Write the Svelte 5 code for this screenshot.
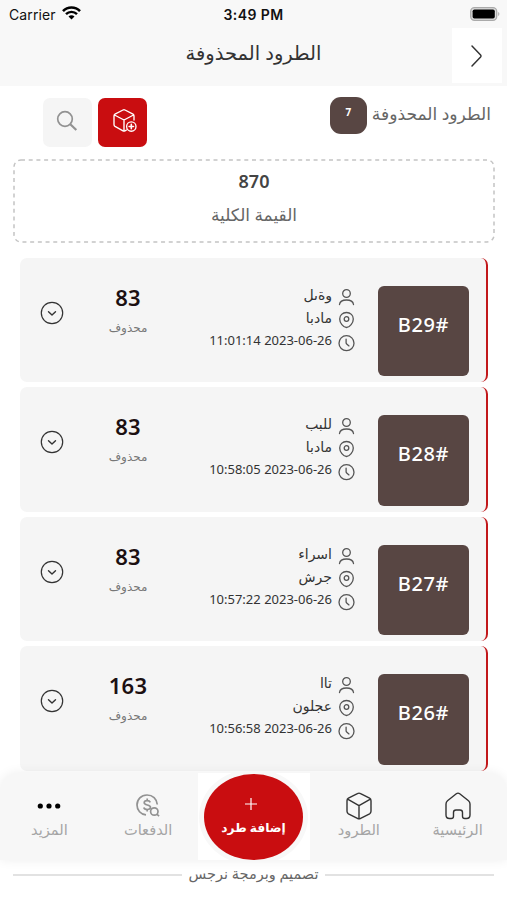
<script lang="ts">
  const parcels = [
    { id: '#B29', name: 'وةىل', city: 'مادبا', date: '2023-06-26 11:01:14', price: 83 },
    { id: '#B28', name: 'للبب', city: 'مادبا', date: '2023-06-26 10:58:05', price: 83 },
    { id: '#B27', name: 'اسراء', city: 'جرش', date: '2023-06-26 10:57:22', price: 83 },
    { id: '#B26', name: 'تاا', city: 'عجلون', date: '2023-06-26 10:56:58', price: 163 }
  ];

  let openId = $state('');

  function toggle(id: string) {
    openId = openId === id ? '' : id;
  }
</script>

<div class="screen" dir="rtl">
  <header>
    <div class="status" dir="ltr">
      <div class="carrier">
        <span>Carrier</span>
        <svg width="19" height="14" viewBox="0 0 19 14" fill="none" stroke="#000">
          <path d="M1 5.1C5.7.3 13.3.3 18 5.1" stroke-width="2.6" />
          <path d="M4 8.2c3-3.1 8-3.1 11 0" stroke-width="2.4" />
          <path d="M9.5 13.6 6.5 10.6c1.7-1.7 4.3-1.7 6 0z" fill="#000" stroke="none" />
        </svg>
      </div>
      <div class="time">3:49 PM</div>
      <svg class="battery" width="30" height="14" viewBox="0 0 30 14">
        <rect x=".7" y=".7" width="26" height="12.6" rx="3.8" fill="#ddd" stroke="#aaa" stroke-width="1.3" />
        <rect x="2.6" y="2.5" width="22.2" height="9" rx="1.8" fill="#000" />
        <path d="M28.2 5c1.6.5 1.6 3.5 0 4z" fill="#aaa" />
      </svg>
    </div>
    <div class="title-bar">
      <button class="back" aria-label="رجوع">
        <svg width="14" height="24" viewBox="0 0 14 24" fill="none" stroke="#333" stroke-width="1.5" stroke-linecap="round" stroke-linejoin="round">
          <path d="m2 2 8.6 9q.9 1 0 2L2 22" />
        </svg>
      </button>
      <h1>الطرود المحذوفة</h1>
    </div>
  </header>

  <div class="tools">
    <h2>الطرود المحذوفة</h2>
    <span class="count">{7}</span>
    <button class="tool add" aria-label="إضافة">
      <svg width="25" height="25" viewBox="0 0 25 25" fill="none" stroke="#fff" stroke-width="1.35" stroke-linejoin="round" stroke-linecap="round">
        <path d="M22 12V8q0-1.2-1-1.8L13 2q-1-.5-2 0L3 6.2Q2 6.8 2 8v8.500q0 1.200 1 1.800l8 4.500q1 .5 2 0l1.500-.8M2.500 7 12 12l9.500-5M12 12v11" />
        <circle cx="19.300" cy="18.500" r="4.700" fill="#c90d10" />
        <path d="M19.300 16.300v4.400M17.100 18.500h4.400" stroke-width="1.600" />
      </svg>
    </button>
    <button class="tool search" aria-label="بحث">
      <svg width="22" height="22" viewBox="0 0 22 22" fill="none" stroke="#929292" stroke-width="1.7">
        <circle cx="9" cy="9" r="7.300" />
        <path d="m14.300 14.300 6 5.700" stroke-width="2.200" />
      </svg>
    </button>
  </div>

  <div class="total">
    <svg class="dashes" width="482" height="84">
      <rect x="1" y="1" width="480" height="82" rx="7" />
    </svg>
    <strong>870</strong>
    <span>القيمة الكلية</span>
  </div>

  <main>
    {#each parcels as parcel}
      <article class="card">
        <div class="tile">{parcel.id}</div>
        <div class="info">
          <div class="line">
            <svg width="17" height="18" viewBox="0 0 17 18">
              <circle cx="8.500" cy="5.500" r="3.800" />
              <path d="M1.500 16.500c.8-6 13.200-6 14 0" />
            </svg>
            <span>{parcel.name}</span>
          </div>
          <div class="line">
            <svg width="17" height="18" viewBox="0 0 17 18">
              <path d="M8.500 1.500c-4 0-6.800 2.800-6.800 6.400 0 4 3.500 8.600 6.800 8.600s6.800-4.600 6.800-8.600c0-3.600-2.800-6.400-6.800-6.400z" />
              <circle cx="8.500" cy="8" r="2.300" />
            </svg>
            <span>{parcel.city}</span>
          </div>
          <div class="line">
            <svg width="17" height="18" viewBox="0 0 17 18">
              <circle cx="8.500" cy="9.200" r="7.500" />
              <path d="M8.100 5.200v3.500q0 .7.6 1.200l2.300 2" />
            </svg>
            <span class="date">{parcel.date}</span>
          </div>
        </div>
        <div class="amount">
          <strong>{parcel.price}</strong>
          <span>محذوف</span>
        </div>
        <button class="expand" class:open={openId === parcel.id} onclick={() => toggle(parcel.id)} aria-label="تفاصيل">
          <svg width="24" height="24" viewBox="0 0 24 24" fill="none" stroke="#333" stroke-width="1.200" stroke-linecap="round" stroke-linejoin="round">
            <circle cx="12" cy="12" r="10.700" />
            <path d="m8.500 10.700 3.500 3.400 3.500-3.400" stroke-width="1.400" />
          </svg>
        </button>
      </article>
    {/each}
  </main>

  <nav>
    <a class="tab" href="#home">
      <svg width="28" height="28" viewBox="0 0 28 28" fill="none" stroke="#333" stroke-width="1.400" stroke-linejoin="round">
        <path d="M2 12q0-2 1.500-3.200L12.300 1.800q1.700-1.300 3.400 0l8.800 7Q26 10 26 12v11q0 3.500-3.500 3.500h-1.700q-2.300 0-2.300-2.300v-3.700q0-2.500-2.500-2.500h-4q-2.500 0-2.500 2.500v3.700q0 2.300-2.300 2.300H5.500Q2 26.500 2 23z" />
      </svg>
      <span>الرئيسية</span>
    </a>
    <a class="tab" href="#parcels">
      <svg width="28" height="28" viewBox="0 0 28 28" fill="none" stroke="#333" stroke-width="1.400" stroke-linejoin="round">
        <path d="M12.400 1.600q1.600-.9 3.200 0l9 4.600Q26 7 26 8.700v10.600q0 1.700-1.400 2.500l-9 4.600q-1.600.9-3.200 0l-9-4.600Q2 21 2 19.300V8.700Q2 7 3.400 6.200zM2.600 7.200 14 13.600l11.400-6.400M14 13.600v13" />
      </svg>
      <span>الطرود</span>
    </a>
    <div class="middle">
      <button class="new">
        <svg width="14" height="14" viewBox="0 0 14 14" stroke="#fff" stroke-width="1.200">
          <path d="M7 1v12M1 7h12" />
        </svg>
        <span>إضافة طرد</span>
      </button>
    </div>
    <a class="tab" href="#payments">
      <svg width="28" height="28" viewBox="0 0 28 28" fill="none" stroke="#929292" stroke-width="1.700">
        <path d="M23.300 12.500C22.800 6.800 18.700 3 13 3 7.200 3 3 7.300 3 13c0 5.200 3.700 9.400 9 9.900" />
        <path d="M16.300 10.300c-.5-1.200-1.600-1.700-3.200-1.700-1.700 0-2.900.8-2.900 2.100 0 3 6.300 1.600 6.300 4.600 0 1.500-1.300 2.200-3.200 2.200s-3.100-.7-3.500-2.100M13.200 6.600v2M13.200 17.500v2" />
        <circle cx="20.300" cy="19.500" r="3.700" />
        <path d="m22.800 22.200 2.300 1.900" />
      </svg>
      <span>الدفعات</span>
    </a>
    <a class="tab" href="#more">
      <svg width="28" height="28" viewBox="0 0 28 28" fill="#000">
        <circle cx="5.300" cy="14" r="2.600" />
        <circle cx="14" cy="14" r="2.600" />
        <circle cx="22.700" cy="14" r="2.600" />
      </svg>
      <span>المزيد</span>
    </a>
  </nav>

  <footer><span>تصميم وبرمجة نرجس</span></footer>
</div>

<style>
  :global(body) {
    background: #fff;
  }

  .screen {
    height: 900px;
    overflow: hidden;
    display: flex;
    flex-direction: column;
    font-family: 'Noto Sans', 'DejaVu Sans', sans-serif;
    color: #333;
  }

  button {
    border: 0;
    padding: 0;
    font-family: inherit;
    cursor: pointer;
    display: flex;
    align-items: center;
    justify-content: center;
  }

  h1, h2 {
    margin: 0;
    font-weight: 400;
    white-space: nowrap;
  }

  svg {
    display: block;
    flex-shrink: 0;
  }

  header {
    height: 86px;
    flex-shrink: 0;
    background: #f8f8f8;
  }

  .status {
    height: 28px;
    display: grid;
    grid-template-columns: 1fr auto 1fr;
    align-items: center;
    padding: 0 7px 0 9px;
    font-family: Inter, sans-serif;
    font-size: 14px;
    color: #111;
  }

  .carrier {
    display: flex;
    align-items: center;
    gap: 6px;
    letter-spacing: 0.1px;
  }

  .carrier svg {
    margin-top: -2px;
  }

  .time {
    margin-right: 2px;
    font-weight: 600;
    letter-spacing: 0.4px;
  }

  .battery {
    justify-self: end;
    margin-top: -1px;
  }

  .title-bar {
    height: 55px;
    display: grid;
    grid-template-columns: 50px 1fr 50px;
    padding: 0 5px;
  }

  .back {
    background: #fff;
  }

  h1 {
    text-align: center;
    font-size: 19.5px;
    line-height: 49px;
    color: #333;
  }

  .tools {
    height: 73px;
    flex-shrink: 0;
    display: flex;
    align-items: flex-start;
    padding: 11px 16px 0 43px;
    box-sizing: border-box;
  }

  h2 {
    font-size: 17.1px;
    line-height: 33px;
    color: #666;
  }

  .count {
    width: 37px;
    height: 37px;
    margin: 0 5px 0 auto;
    border-radius: 11px;
    background: #584643;
    color: #fff;
    font-size: 10px;
    font-weight: 700;
    line-height: 31px;
    text-align: center;
  }

  .tool {
    width: 49px;
    height: 49px;
    margin-top: 1px;
    padding-bottom: 4px;
    border-radius: 7px;
    background: #f5f5f5;
  }

  .search {
    padding-right: 2px;
  }

  .add {
    background: #c90d10;
    margin-left: 6px;
    padding-left: 4px;
  }

  .total {
    position: relative;
    height: 84px;
    width: 482px;
    margin: 0 12px 0 13px;
    flex-shrink: 0;
    display: flex;
    flex-direction: column;
    align-items: center;
    color: #666;
  }

  .dashes {
    position: absolute;
    inset: 0;
    fill: none;
    stroke: #c4c4c4;
    stroke-width: 1.5;
    stroke-dasharray: 4 3.7;
  }

  .total strong {
    margin-top: 8px;
    font-size: 18px;
    font-weight: 600;
    line-height: 28px;
    color: #444;
  }

  .total span {
    margin-top: 6px;
    font-size: 17px;
    line-height: 28px;
  }

  main {
    height: 530px;
    flex-shrink: 0;
    box-sizing: border-box;
    padding: 14.5px 19px 0 20px;
    display: flex;
    flex-direction: column;
    gap: 5px;
    overflow: hidden;
  }

  .card {
    height: 124.5px;
    box-sizing: border-box;
    flex-shrink: 0;
    display: flex;
    align-items: flex-start;
    background: #f5f5f5;
    border-right: 2px solid #c2181b;
    border-radius: 7px;
    padding: 28px 17px 0 20px;
  }

  .tile {
    width: 91px;
    height: 90.5px;
    box-sizing: border-box;
    border-radius: 6px;
    background: #584643;
    color: #fff;
    font-size: 20px;
    font-weight: 500;
    letter-spacing: 0.6px;
    line-height: 78px;
    text-align: center;
  }

  .info {
    width: 184px;
    margin-right: 22px;
  }

  .line {
    height: 23.2px;
    display: flex;
    gap: 7px;
    font-size: 14px;
    line-height: 17px;
    white-space: nowrap;
  }

  .line svg {
    margin: 2px 1px 0 -1px;
    fill: none;
    stroke: #555;
    stroke-width: 1.3;
    stroke-linecap: round;
  }

  .date {
    font-size: 13px;
    line-height: 17px;
  }

  .amount {
    width: 90px;
    margin-right: -1px;
    display: flex;
    flex-direction: column;
    align-items: center;
  }

  .amount strong {
    margin-top: -4px;
    font-size: 22px;
    font-weight: 600;
    line-height: 30px;
    letter-spacing: 0.2px;
    color: #1c1012;
  }

  .amount span {
    margin-top: 6px;
    font-size: 12px;
    line-height: 20px;
    color: #777;
  }

  .expand {
    background: none;
    margin: 15px auto 0 0;
  }

  .expand.open {
    transform: rotate(180deg);
  }

  nav {
    height: 87px;
    flex-shrink: 0;
    display: flex;
    background: #f7f7f7;
    border-radius: 18px 18px 0 0;
    box-shadow: 0 0 12px rgba(0, 0, 0, 0.07);
    position: relative;
  }

  .tab {
    flex: 1;
    display: flex;
    flex-direction: column;
    align-items: center;
    padding-top: 19px;
    text-decoration: none;
    color: #a5a5a5;
    font-size: 14.6px;
    line-height: 18px;
  }

  .middle {
    width: 112px;
    background: #fff;
    overflow: hidden;
  }

  .new {
    width: 99px;
    height: 86px;
    margin: 1px 6.5px 0 auto;
    border-radius: 50%;
    background: #c90d10;
    box-shadow: 0 0 0 5px #f8f8f8;
    color: #fff;
    flex-direction: column;
    font-size: 12.2px;
    font-weight: 700;
    line-height: 20px;
    gap: 7px;
  }

  .new svg {
    margin-left: 5px;
    align-self: center;
    transform: translateX(-5px);
  }

  footer {
    height: 40px;
    margin: 0 13px;
    display: flex;
    align-items: flex-start;
    gap: 7px;
    font-size: 14.5px;
    line-height: 27px;
    color: #666;
    white-space: nowrap;
  }

  footer::before,
  footer::after {
    content: '';
    flex: 1;
    height: 2px;
    margin-top: 14px;
    background: #e2e2e2;
  }
</style>
